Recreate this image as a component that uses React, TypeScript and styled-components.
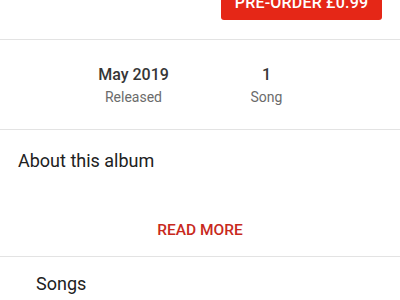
import React from "react";
import styled, { createGlobalStyle } from "styled-components";

const Global = createGlobalStyle`
  html, body { margin: 0; padding: 0; background: #ffffff; }
  body { font-family: Roboto, "Noto Sans", Arial, sans-serif; overflow: hidden; }
  * { box-sizing: border-box; }
`;

const Page = styled.div`
  width: 400px;
  height: 300px;
  overflow: hidden;
  display: flex;
  flex-direction: column;
`;

const TopBar = styled.div`
  height: 39px;
  display: flex;
  justify-content: flex-end;
  align-items: flex-start;
  padding-right: 18px;
`;

const BuyButton = styled.button`
  margin-top: -16px;
  width: 161px;
  height: 36px;
  border: none;
  border-radius: 3px;
  background: #e52717;
  color: #ffffff;
  font-family: Roboto, Arial, sans-serif;
  font-weight: 500;
  font-size: 16px;
  letter-spacing: 0.2px;
  display: flex;
  align-items: center;
  justify-content: center;
  padding: 0;
`;

const Divider = styled.div`
  height: 1px;
  background: #e3e3e3;
  flex-shrink: 0;
`;

const Stats = styled.div`
  height: 89px;
  display: grid;
  grid-template-columns: 1fr 1fr;
  padding: 0 67px;
  align-items: center;
`;

const Stat = styled.div`
  display: flex;
  flex-direction: column;
  align-items: center;
  gap: 5px;
  padding-top: 2px;
`;

const StatValue = styled.div`
  font-size: 16px;
  font-weight: 500;
  color: #363636;
  line-height: 19px;
`;

const StatLabel = styled.div`
  font-size: 14px;
  color: #6b6b6b;
  line-height: 17px;
`;

const About = styled.div`
  height: 126px;
  display: flex;
  flex-direction: column;
  padding: 20px 18px 0;
`;

const SectionTitle = styled.div<{ $indent?: number }>`
  font-size: 18px;
  color: #212121;
  line-height: 22px;
  padding-left: ${(p) => p.$indent ?? 0}px;
`;

const ReadMore = styled.div`
  margin-top: 48px;
  text-align: center;
  color: #c8291d;
  font-size: 15.5px;
  font-weight: 500;
  line-height: 20px;
`;

const Songs = styled.div`
  padding: 16px 18px 0;
`;

export default function App() {
  return (
    <Page>
      <Global />
      <TopBar>
        <BuyButton>PRE-ORDER £0.99</BuyButton>
      </TopBar>
      <Divider />
      <Stats>
        <Stat>
          <StatValue>May 2019</StatValue>
          <StatLabel>Released</StatLabel>
        </Stat>
        <Stat>
          <StatValue>1</StatValue>
          <StatLabel>Song</StatLabel>
        </Stat>
      </Stats>
      <Divider />
      <About>
        <SectionTitle>About this album</SectionTitle>
        <ReadMore>READ MORE</ReadMore>
      </About>
      <Divider />
      <Songs>
        <SectionTitle $indent={18}>Songs</SectionTitle>
      </Songs>
    </Page>
  );
}
